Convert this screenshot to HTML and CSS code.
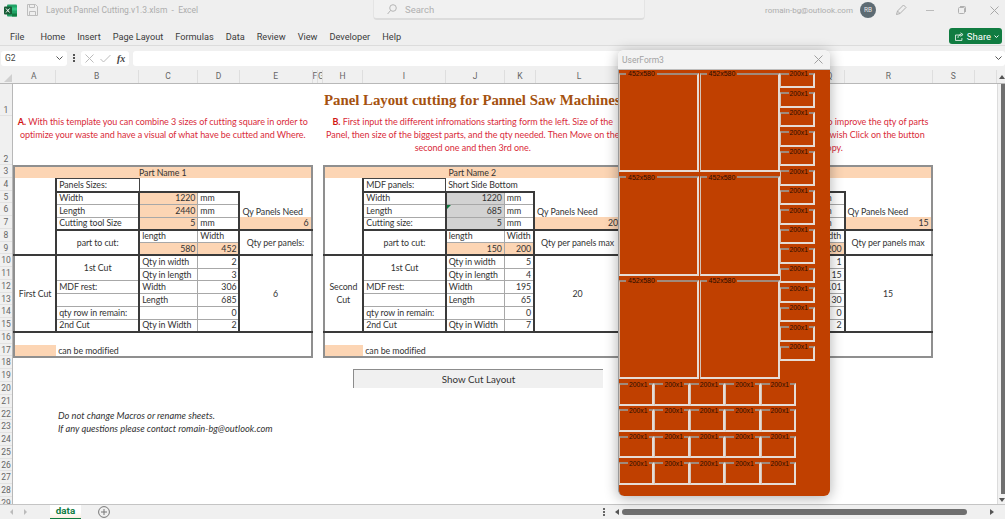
FILE: index.html
```html
<!DOCTYPE html>
<html lang="en">
<head>
<meta charset="utf-8">
<title>Layout Pannel Cutting.v1.3.xlsm - Excel</title>
<link rel="stylesheet" href="styles.css">
</head>
<body>
<div class="app">
  <header class="titlebar">
    <svg class="xl-icon" width="13" height="13" viewBox="0 0 13 13"><rect x="3" y="0.5" width="10" height="12" rx="1" fill="#21a366"/><rect x="8" y="3.5" width="5" height="3" fill="#33c481"/><rect x="8" y="9.5" width="5" height="3" fill="#107c41"/><rect x="0" y="2.5" width="8" height="8" rx="1" fill="#185c37"/><path d="M2 4.5l3.6 4M5.6 4.5l-3.6 4" stroke="#fff" stroke-width="1"/></svg>
    <svg class="save-icon" width="11" height="12" viewBox="0 0 11 12" fill="none" stroke="#bdbdbd"><path d="M.5.5h8l2 2v9H.5z"/><path d="M2.5.5v3h5v-3M2.5 11.5v-4h6v4"/></svg>
    <span class="doc-name">Layout Pannel Cutting.v1.3.xlsm &nbsp;-&nbsp; Excel</span>
    <div class="search">
      <svg width="10" height="11" viewBox="0 0 10 11" fill="none" stroke="#b5b5b5"><circle cx="6" cy="4" r="3.3"/><path d="M3.6 6.4L.6 10"/></svg>
      <span>Search</span>
    </div>
    <span class="account">romain-bg@outlook.com</span>
    <span class="avatar">RB</span>
    <svg class="pen" width="12" height="12" viewBox="0 0 12 12" fill="none" stroke="#b0b0b0"><path d="M1.5 10.5l1-3.5L8.5 1l2.5 2.5-6 6z"/><path d="M2.5 7l2.5 2.5"/></svg>
    <span class="win-btn win-min"></span>
    <svg class="win-btn win-max" width="8" height="8" viewBox="0 0 8 8" fill="none" stroke="#b0b0b0"><rect x=".5" y="1.5" width="6" height="6" rx="1"/><path d="M2 .5h4.5a1 1 0 011 1V6"/></svg>
    <svg class="win-btn win-close" width="9" height="9" viewBox="0 0 9 9" stroke="#a8a8a8"><path d="M.5.5l8 8M8.5.5l-8 8"/></svg>
  </header>

  <nav class="ribbon">
    <span class="tab-file">File</span>
    <span>Home</span>
    <span>Insert</span>
    <span>Page Layout</span>
    <span>Formulas</span>
    <span>Data</span>
    <span>Review</span>
    <span>View</span>
    <span>Developer</span>
    <span>Help</span>
    <button class="share">
      <svg width="9" height="9" viewBox="0 0 9 9" fill="none" stroke="#fff" stroke-width=".8"><path d="M6 3H.5v5.5h6.5V6"/><path d="M3 6c0-2 1.5-3.5 3.5-3.5M5.5.8l2.7 1.7L5.5 4.4"/></svg>
      <span>Share</span>
      <svg width="5" height="3" viewBox="0 0 5 3" fill="none" stroke="#fff"><path d="M.5.5l2 2 2-2"/></svg>
    </button>
  </nav>

  <div class="formula">
    <div class="namebox"><span>G2</span><svg width="7" height="4" viewBox="0 0 7 4" fill="none" stroke="#555"><path d="M.5.5l3 3 3-3"/></svg></div>
    <svg class="vdots" width="2" height="8" viewBox="0 0 2 8" fill="#555"><rect width="2" height="2"/><rect y="3" width="2" height="2"/><rect y="6" width="2" height="2"/></svg>
    <div class="fx-box">
      <svg width="9" height="9" viewBox="0 0 9 9" stroke="#bbb"><path d="M.5.5l8 8M8.5.5l-8 8"/></svg>
      <svg width="11" height="9" viewBox="0 0 11 9" fill="none" stroke="#bbb"><path d="M.5 5l3 3 7-7"/></svg>
      <i class="fx">fx</i>
    </div>
    <div class="formula-input"><svg width="7" height="4" viewBox="0 0 7 4" fill="none" stroke="#555"><path d="M.5.5l3 3 3-3"/></svg></div>
  </div>

  <div class="colhead">
    <span class="corner"></span>
    <span>A</span><span>B</span><span>C</span><span>D</span><span>E</span><span>F</span><span>G</span><span>H</span><span>I</span><span>J</span><span>K</span><span>L</span><span>M</span><span>N</span><span>O</span><span>P</span><span>Q</span><span>R</span><span>S</span><span></span><span class="up-arrow"></span>
  </div>

  <main class="main">
    <div class="rowhead">
      <span class="r1">1</span><span class="r2">2</span>
      <span>3</span><span>4</span><span>5</span><span>6</span><span>7</span><span>8</span><span>9</span><span>10</span><span>11</span><span>12</span><span>13</span><span>14</span><span>15</span><span>16</span><span>17</span><span>18</span><span>19</span><span>20</span><span>21</span><span>22</span><span>23</span><span>24</span><span>25</span><span>26</span><span>27</span><span>28</span><span>29</span>
    </div>

    <div class="sheet">
      <h1 class="title">Panel Layout cutting for Pannel Saw Machines</h1>
      <div class="notes">
        <p class="note"><b>A.</b> With this template you can combine 3 sizes of cutting square in order to<br>optimize your waste and have a visual of what have be cutted and Where.</p>
        <p class="note"><b>B.</b> First input the different infromations starting form the left. Size of the<br>Panel, then size of the biggest parts, and the qty needed. Then Move on the<br>second one and then 3rd one.</p>
        <p class="note"><b>C.</b> You can modify the quantity of each part size to improve the qty of parts<br>and your waste in the panels. When done, if you wish Click on the button<br>to see the layout you can copy.</p>
      </div>

      <div class="blocks">
        <table class="part part-a">
          <colgroup><col class="ca"><col class="cb"><col class="cc"><col class="cd"><col class="ce"></colgroup>
          <tr><td colspan="5" class="band">Part Name 1</td></tr>
          <tr><td rowspan="6" class="br bb"></td><td class="thin dk">Panels Sizes:</td><td colspan="3"></td></tr>
          <tr><td class="thin bt bl br">Width</td><td class="thin bt fill r">1220</td><td class="thin bt br">mm</td><td rowspan="2" class="low">Qy Panels Need</td></tr>
          <tr><td class="thin bl br">Length</td><td class="thin fill r">2440</td><td class="thin br">mm</td></tr>
          <tr><td class="thin bl br bb">Cutting tool Size</td><td class="thin fill r bb">5</td><td class="thin br bb">mm</td><td class="fill r bb">6</td></tr>
          <tr><td rowspan="2" class="thin bl br bb c">part to cut:</td><td class="thin">length</td><td class="thin br">Width</td><td rowspan="2" class="bb c">Qty per panels:</td></tr>
          <tr><td class="thin fill r bb">580</td><td class="thin fill r br bb">452</td></tr>
          <tr><td rowspan="6" class="bb br c">First Cut</td><td rowspan="2" class="thin br c">1st Cut</td><td class="thin">Qty in width</td><td class="thin r br">2</td><td rowspan="6" class="bb c">6</td></tr>
          <tr><td class="thin">Qty in length</td><td class="thin r br">3</td></tr>
          <tr><td class="thin br">MDF rest:</td><td class="thin">Width</td><td class="thin r br">306</td></tr>
          <tr><td class="thin br"></td><td class="thin">Length</td><td class="thin r br">685</td></tr>
          <tr><td class="thin br">qty row in remain:</td><td class="thin"></td><td class="thin r br">0</td></tr>
          <tr><td class="thin br bb">2nd Cut</td><td class="thin bb">Qty in Width</td><td class="thin r br bb">2</td></tr>
          <tr><td colspan="5"></td></tr>
          <tr><td class="fill"></td><td colspan="4">can be modified</td></tr>
        </table>

        <table class="part part-b">
          <colgroup><col class="ca"><col class="cb"><col class="cc"><col class="cd"><col class="ce"></colgroup>
          <tr><td colspan="5" class="band">Part Name 2</td></tr>
          <tr><td rowspan="6" class="br bb"></td><td class="thin dk">MDF panels:</td><td colspan="3">Short Side Bottom</td></tr>
          <tr><td class="thin bt bl br">Width</td><td class="thin bt grey r">1220</td><td class="thin bt br">mm</td><td rowspan="2" class="low">Qy Panels Need</td></tr>
          <tr><td class="thin bl br">Length</td><td class="thin grey r flag">685</td><td class="thin br">mm</td></tr>
          <tr><td class="thin bl br bb">Cutting size:</td><td class="thin grey r bb">5</td><td class="thin br bb">mm</td><td class="fill r bb">20</td></tr>
          <tr><td rowspan="2" class="thin bl br bb c">part to cut:</td><td class="thin">length</td><td class="thin br">Width</td><td rowspan="2" class="bb c">Qty per panels max</td></tr>
          <tr><td class="thin fill r bb">150</td><td class="thin fill r br bb">200</td></tr>
          <tr><td rowspan="6" class="bb br c wrap">Second<br>Cut</td><td rowspan="2" class="thin br c">1st Cut</td><td class="thin">Qty in width</td><td class="thin r br">5</td><td rowspan="6" class="bb c">20</td></tr>
          <tr><td class="thin">Qty in length</td><td class="thin r br">4</td></tr>
          <tr><td class="thin br">MDF rest:</td><td class="thin">Width</td><td class="thin r br">195</td></tr>
          <tr><td class="thin br"></td><td class="thin">Length</td><td class="thin r br">65</td></tr>
          <tr><td class="thin br">qty row in remain:</td><td class="thin"></td><td class="thin r br">0</td></tr>
          <tr><td class="thin br bb">2nd Cut</td><td class="thin bb">Qty in Width</td><td class="thin r br bb">7</td></tr>
          <tr><td colspan="5"></td></tr>
          <tr><td class="fill"></td><td colspan="4">can be modified</td></tr>
        </table>

        <table class="part part-b">
          <colgroup><col class="ca"><col class="cb"><col class="cc"><col class="cd"><col class="ce"></colgroup>
          <tr><td colspan="5" class="band">Part Name 3</td></tr>
          <tr><td rowspan="6" class="br bb"></td><td class="thin dk">MDF panels:</td><td colspan="3"></td></tr>
          <tr><td class="thin bt bl br">Width</td><td class="thin bt grey r">1220</td><td class="thin bt br">mm</td><td rowspan="2" class="low">Qy Panels Need</td></tr>
          <tr><td class="thin bl br">Length</td><td class="thin grey r">65</td><td class="thin br">mm</td></tr>
          <tr><td class="thin bl br bb">Cutting size:</td><td class="thin grey r bb">5</td><td class="thin br bb">mm</td><td class="fill r bb">15</td></tr>
          <tr><td rowspan="2" class="thin bl br bb c">part to cut:</td><td class="thin">length</td><td class="thin br">Width</td><td rowspan="2" class="bb c">Qty per panels max</td></tr>
          <tr><td class="thin fill r bb">30</td><td class="thin fill r br bb">200</td></tr>
          <tr><td rowspan="6" class="bb br c wrap">Third<br>Cut</td><td rowspan="2" class="thin br c">1st Cut</td><td class="thin">Qty in width</td><td class="thin r br">1</td><td rowspan="6" class="bb c">15</td></tr>
          <tr><td class="thin">Qty in length</td><td class="thin r br">15</td></tr>
          <tr><td class="thin br">MDF rest:</td><td class="thin">Width</td><td class="thin r br">101</td></tr>
          <tr><td class="thin br"></td><td class="thin">Length</td><td class="thin r br">30</td></tr>
          <tr><td class="thin br">qty row in remain:</td><td class="thin"></td><td class="thin r br">0</td></tr>
          <tr><td class="thin br bb">2nd Cut</td><td class="thin bb">Qty in Width</td><td class="thin r br bb">2</td></tr>
          <tr><td colspan="5"></td></tr>
          <tr><td class="fill"></td><td colspan="4">can be modified</td></tr>
        </table>
      </div>

      <button class="show-layout">Show Cut Layout</button>
      <p class="advice">Do not change Macros or rename sheets.<br>If any questions please contact romain-bg@outlook.com</p>
    </div>

    <div class="vscroll"><span class="thumb-v"></span><span class="down-arrow"></span></div>
  </main>

  <footer class="tabsbar">
    <div class="sheet-nav"><span class="tri-l"></span><span class="tri-r"></span></div>
    <span class="sheet-tab">data</span>
    <svg class="add-sheet" width="12" height="12" viewBox="0 0 12 12" fill="none" stroke="#777"><circle cx="6" cy="6" r="5.4"/><path d="M6 3v6M3 6h6"/></svg>
    <svg class="tab-dots" width="2" height="8" viewBox="0 0 2 8" fill="#666"><rect width="2" height="2"/><rect y="3" width="2" height="2"/><rect y="6" width="2" height="2"/></svg>
    <span class="arrow-l"></span>
    <span class="thumb-h"></span>
    <span class="arrow-r"></span>
  </footer>

  <section class="form">
    <div class="form-title"><span>UserForm3</span>
      <svg width="9" height="9" viewBox="0 0 9 9" stroke="#a0a0a0"><path d="M.5.5l8 8M8.5.5l-8 8"/></svg>
    </div>
    <div class="form-body">
      <div class="upper">
        <div class="big-grid">
          <fieldset class="frame big"><legend>452x580</legend></fieldset>
          <fieldset class="frame big"><legend>452x580</legend></fieldset>
          <fieldset class="frame big"><legend>452x580</legend></fieldset>
          <fieldset class="frame big"><legend>452x580</legend></fieldset>
          <fieldset class="frame big"><legend>452x580</legend></fieldset>
          <fieldset class="frame big"><legend>452x580</legend></fieldset>
        </div>
        <div class="side-grid">
          <fieldset class="frame side"><legend>200x1</legend></fieldset>
          <fieldset class="frame side"><legend>200x1</legend></fieldset>
          <fieldset class="frame side"><legend>200x1</legend></fieldset>
          <fieldset class="frame side"><legend>200x1</legend></fieldset>
          <fieldset class="frame side"><legend>200x1</legend></fieldset>
          <fieldset class="frame side"><legend>200x1</legend></fieldset>
          <fieldset class="frame side"><legend>200x1</legend></fieldset>
          <fieldset class="frame side"><legend>200x1</legend></fieldset>
          <fieldset class="frame side"><legend>200x1</legend></fieldset>
          <fieldset class="frame side"><legend>200x1</legend></fieldset>
          <fieldset class="frame side"><legend>200x1</legend></fieldset>
          <fieldset class="frame side"><legend>200x1</legend></fieldset>
          <fieldset class="frame side"><legend>200x1</legend></fieldset>
          <fieldset class="frame side"><legend>200x1</legend></fieldset>
          <fieldset class="frame side"><legend>200x1</legend></fieldset>
        </div>
      </div>
      <div class="lower-grid">
        <fieldset class="frame low-f"><legend>200x1</legend></fieldset><fieldset class="frame low-f"><legend>200x1</legend></fieldset><fieldset class="frame low-f"><legend>200x1</legend></fieldset><fieldset class="frame low-f"><legend>200x1</legend></fieldset><fieldset class="frame low-f"><legend>200x1</legend></fieldset>
        <fieldset class="frame low-f"><legend>200x1</legend></fieldset><fieldset class="frame low-f"><legend>200x1</legend></fieldset><fieldset class="frame low-f"><legend>200x1</legend></fieldset><fieldset class="frame low-f"><legend>200x1</legend></fieldset><fieldset class="frame low-f"><legend>200x1</legend></fieldset>
        <fieldset class="frame low-f"><legend>200x1</legend></fieldset><fieldset class="frame low-f"><legend>200x1</legend></fieldset><fieldset class="frame low-f"><legend>200x1</legend></fieldset><fieldset class="frame low-f"><legend>200x1</legend></fieldset><fieldset class="frame low-f"><legend>200x1</legend></fieldset>
        <fieldset class="frame low-f"><legend>200x1</legend></fieldset><fieldset class="frame low-f"><legend>200x1</legend></fieldset><fieldset class="frame low-f"><legend>200x1</legend></fieldset><fieldset class="frame low-f"><legend>200x1</legend></fieldset><fieldset class="frame low-f"><legend>200x1</legend></fieldset>
      </div>
    </div>
  </section>
</div>
</body>
</html>
```
FILE: styles.css
```css
* { box-sizing: border-box; }
html, body { margin: 0; padding: 0; height: 100%; overflow: hidden; }
body { font-family: Roboto, "Open Sans", sans-serif; background: #f0f0f0; }

.app { position: relative; width: 1005px; height: 519px; overflow: hidden; display: flex; flex-direction: column; background: #efefef; }

/* title bar */
.titlebar { height: 24px; flex: none; display: flex; align-items: center; padding-left: 4px; color: #adadad; font-size: 8.5px; }
.titlebar > * { flex: none; }
.xl-icon { margin-top: -4px; }
.save-icon { margin-left: 10px; margin-top: -4px; }
.doc-name { margin-left: 8px; margin-top: -4px; width: 327px; white-space: nowrap; }
.search { width: 272px; height: 20px; margin-top: -4px; border-radius: 0 0 4px 4px; border: 1px solid #e4e4e4; border-top: 0; border-bottom: 2px solid #dcdcdc; display: flex; align-items: center; gap: 8px; padding-left: 13px; background: #f1f1f1; font-size: 9.5px; color: #b0b0b0; }
.account { margin-left: 120px; margin-top: -4px; width: 95px; white-space: nowrap; font-size: 8px; }
.avatar { width: 16px; height: 16px; margin-top: -4px; border-radius: 50%; background: #5d6b73; color: #e8e8e8; font-size: 6.5px; display: flex; align-items: center; justify-content: center; }
.pen { margin-left: 19px; margin-top: -4px; }
.win-btn { margin-top: -4px; }
.win-min { width: 8px; height: 1px; background: #bbb; margin-left: 19px; }
.win-max { margin-left: 24px; }
.win-close { margin-left: 23.5px; }

/* ribbon tabs */
.ribbon { height: 22px; flex: none; display: flex; align-items: center; gap: 12px; padding: 4px 0 0 10px; font-size: 9.2px; color: #3c3c3c; border-bottom: 1px solid #dcdcdc; white-space: nowrap; }
.tab-file { margin-right: 4px; }
.share { margin-left: auto; margin-right: 3px; width: 53px; height: 16px; border: 0; border-radius: 3px; background: #107c41; color: #fff; font: 9.5px Roboto, sans-serif; display: flex; align-items: center; gap: 3px; padding: 0 3px 0 6px; margin-top: -1px; }
.share span { flex: 1; text-align: left; }

/* formula bar */
.formula { height: 24px; flex: none; display: flex; align-items: center; padding-left: 1px; background: #f0f0f0; }
.namebox { width: 66px; height: 15px; background: #fff; border-radius: 3px; display: flex; align-items: center; justify-content: space-between; padding: 0 4px; font-size: 8.5px; color: #444; }
.vdots { margin-left: 6px; }
.fx-box { width: 48px; height: 15px; margin-left: 6px; background: #fff; border-radius: 3px; display: flex; align-items: center; gap: 6px; padding-left: 4px; }
.fx { font: italic bold 10px "Liberation Serif", serif; color: #444; }
.formula-input { flex: 1; height: 15px; margin-left: 4px; background: #fff; border-radius: 3px; display: flex; align-items: center; justify-content: flex-end; padding-right: 3px; }

/* column headers */
.colhead { height: 14px; flex: none; display: grid; grid-template-columns: 13px 42.5px 83.5px 59px 42px 72.5px 5.5px 5px 40px 83px 59px 31px 87px 10px 40px 83px 59px 30px 87.5px 42.5px 22px 8px; background: #f0f0f0; border-bottom: 1px solid #b8b8b8; font-size: 8.5px; line-height: 13px; color: #666; }
.colhead span { text-align: center; overflow: hidden; border-right: 1px solid #dedede; }
.colhead .corner { border: 0; position: relative; }
.colhead .corner::after { content: ""; position: absolute; right: 1px; bottom: 1px; border-style: solid; border-width: 0 0 8px 8px; border-color: transparent transparent #d0d0d0 transparent; }
.colhead .up-arrow { border: 0; position: relative; }
.colhead .up-arrow::after { content: ""; position: absolute; right: 0; top: 5px; border-style: solid; border-width: 0 3px 4px 3px; border-color: transparent transparent #555 transparent; }

/* main area */
.main { height: 420px; flex: none; display: grid; grid-template-columns: 13px 984px 8px; }
.rowhead { overflow: hidden; background: #f0f0f0; border-right: 1px solid #b8b8b8; display: flex; flex-direction: column; font-size: 8.5px; color: #666; }
.rowhead span { flex: none; height: 12.78px; line-height: 12.5px; text-align: center; border-bottom: 1px solid #e2e2e2; }
.rowhead .r1 { height: 32px; padding-top: 20px; }
.rowhead .r2 { height: 49px; padding-top: 37px; }

.sheet { background: #fff; overflow: hidden; font-family: Lato, "Open Sans", sans-serif; color: #333; font-size: 9px; }
.title { margin: 0; height: 32px; padding: 7px 0 0 311px; font: bold 14.8px/18px "Liberation Serif", serif; color: #a5520f; white-space: nowrap; }
.notes { height: 49px; display: flex; gap: 10.5px; }
.note { flex: none; width: 299.5px; margin: 0; text-align: center; white-space: nowrap; color: #d92b3a; font-size: 9px; letter-spacing: -.05px; line-height: 12.78px; }
.note b { color: #d01414; }

.blocks { display: flex; gap: 10px; height: 192px; }
.part { flex: none; width: 299.5px; table-layout: fixed; border-collapse: collapse; border: 2px solid #8f8f8f; }
.part:last-child { margin-left: 1px; }
.part tr { height: 12.78px; }
.part td { padding: 0 2px; line-height: 10px; white-space: nowrap; overflow: hidden; vertical-align: middle; font-size: 8.8px; letter-spacing: -.08px; }
.part-a .ca { width: 14.19%; } .part-a .cb { width: 27.88%; } .part-a .cc { width: 19.7%; } .part-a .cd { width: 14.02%; } .part-a .ce { width: 24.21%; }
.part-b .ca { width: 13.36%; } .part-b .cb { width: 27.71%; } .part-b .cc { width: 19.7%; } .part-b .cd { width: 10.02%; } .part-b .ce { width: 29.21%; }

.part td.band { background: #fcd5b4; text-align: center; }
.part td.thin { border: 1px solid #a8a8a8; }
.part td.dk { border: 1px solid #444; }
.part td.bt { border-top: 2px solid #3a3a3a; }
.part td.bb { border-bottom: 2px solid #3a3a3a; }
.part td.bl { border-left: 2px solid #3a3a3a; }
.part td.br { border-right: 2px solid #3a3a3a; }
.part td.fill { background: #fcd5b4; }
.part td.grey { background: #d2d2d2; position: relative; }
.part td.r { text-align: right; }
.part td.c { text-align: center; }
.part td.wrap { line-height: 12.78px; }
.part td.low { vertical-align: bottom; }
.part td.flag::before { content: ""; position: absolute; left: 0; top: 0; border-style: solid; border-width: 4px 4px 0 0; border-color: #107c41 transparent transparent transparent; }

.show-layout { display: block; width: 250px; height: 19px; margin: 12px 0 0 340px; padding: 0; border: 0; border-top: 1px solid #8c8c8c; border-left: 1px solid #8c8c8c; background: #f0f0f0; font: 9.8px Lato, sans-serif; color: #333; }
.advice { margin: 22px 0 0 45px; font-style: italic; font-size: 9.3px; line-height: 12.78px; color: #333; }

.vscroll { background: #f2f2f2; border-left: 1px solid #dcdcdc; position: relative; }
.thumb-v { display: block; width: 4px; height: 410px; margin-left: 3px; background: #6f6f6f; }
.down-arrow { position: absolute; right: 0; bottom: 2px; border-style: solid; border-width: 4px 3px 0 3px; border-color: #555 transparent transparent transparent; }

/* bottom bar */
.tabsbar { height: 15px; flex: none; display: flex; align-items: center; background: #f0f0f0; border-top: 1px solid #c4c4c4; }
.tabsbar > * { flex: none; }
.sheet-nav { width: 50px; display: flex; gap: 11px; padding-left: 10px; }
.tri-l { border-style: solid; border-width: 3px 3px 3px 0; border-color: transparent #bbb transparent transparent; }
.tri-r { border-style: solid; border-width: 3px 0 3px 3px; border-color: transparent transparent transparent #bbb; }
.sheet-tab { width: 31px; height: 14px; background: linear-gradient(#fff 55%, #fbeee0); border-bottom: 1px solid #107c41; color: #107c41; font: bold 9.8px/12px Roboto, sans-serif; text-align: center; }
.add-sheet { margin-left: 17px; }
.tab-dots { margin-left: 493px; }
.arrow-l { margin-left: 10px; border-style: solid; border-width: 3.5px 4px 3.5px 0; border-color: transparent #555 transparent transparent; }
.thumb-h { width: 345px; height: 6px; margin-left: 3px; border-radius: 3px; background: #6f6f6f; }
.arrow-r { margin-left: 23px; border-style: solid; border-width: 3.5px 0 3.5px 4px; border-color: transparent transparent transparent #555; }

/* floating user form */
.form { position: absolute; left: 618px; top: 50px; width: 212px; height: 446px; border-radius: 6px; box-shadow: 0 2px 14px rgba(0,0,0,.32); display: flex; flex-direction: column; }
.form-title { height: 20px; flex: none; display: flex; align-items: center; justify-content: space-between; padding: 0 7px 0 4px; background: #f3f3f3; border-radius: 6px 6px 0 0; border-bottom: 1px solid #bdbdbd; color: #a2a2a2; font: 8.5px Roboto, sans-serif; }
.form-body { flex: 1; background: #c04000; border-radius: 0 0 6px 6px; border-left: 1px solid #9a9a9a; font-family: "Liberation Sans", sans-serif; }
.upper { display: flex; margin-top: -1px; }
.big-grid { display: grid; grid-template-columns: 80.5px 80px; grid-auto-rows: 103.5px; }
.side-grid { display: grid; grid-auto-rows: 19.5px; width: 35px; }
.lower-grid { display: grid; grid-template-columns: repeat(5, 35.4px); grid-auto-rows: 26.4px; width: 177px; }

.frame { margin: 0; padding: 0; min-width: 0; border-style: solid; border-width: 2px 2px 2px 1px; border-color: #a08a7c #e6dcd5 #e6dcd5 #d5c2b5; }
.frame legend { padding: 0 1px; margin-left: 8px; font-size: 6.8px; line-height: 9px; color: #2a0e00; white-space: nowrap; }
.big { height: 103px; width: 80px; }
.big legend { margin-left: 6px; padding: 0 2px; font-size: 7px; }
.side { height: 19px; }
.low-f { height: 26px; }
```
